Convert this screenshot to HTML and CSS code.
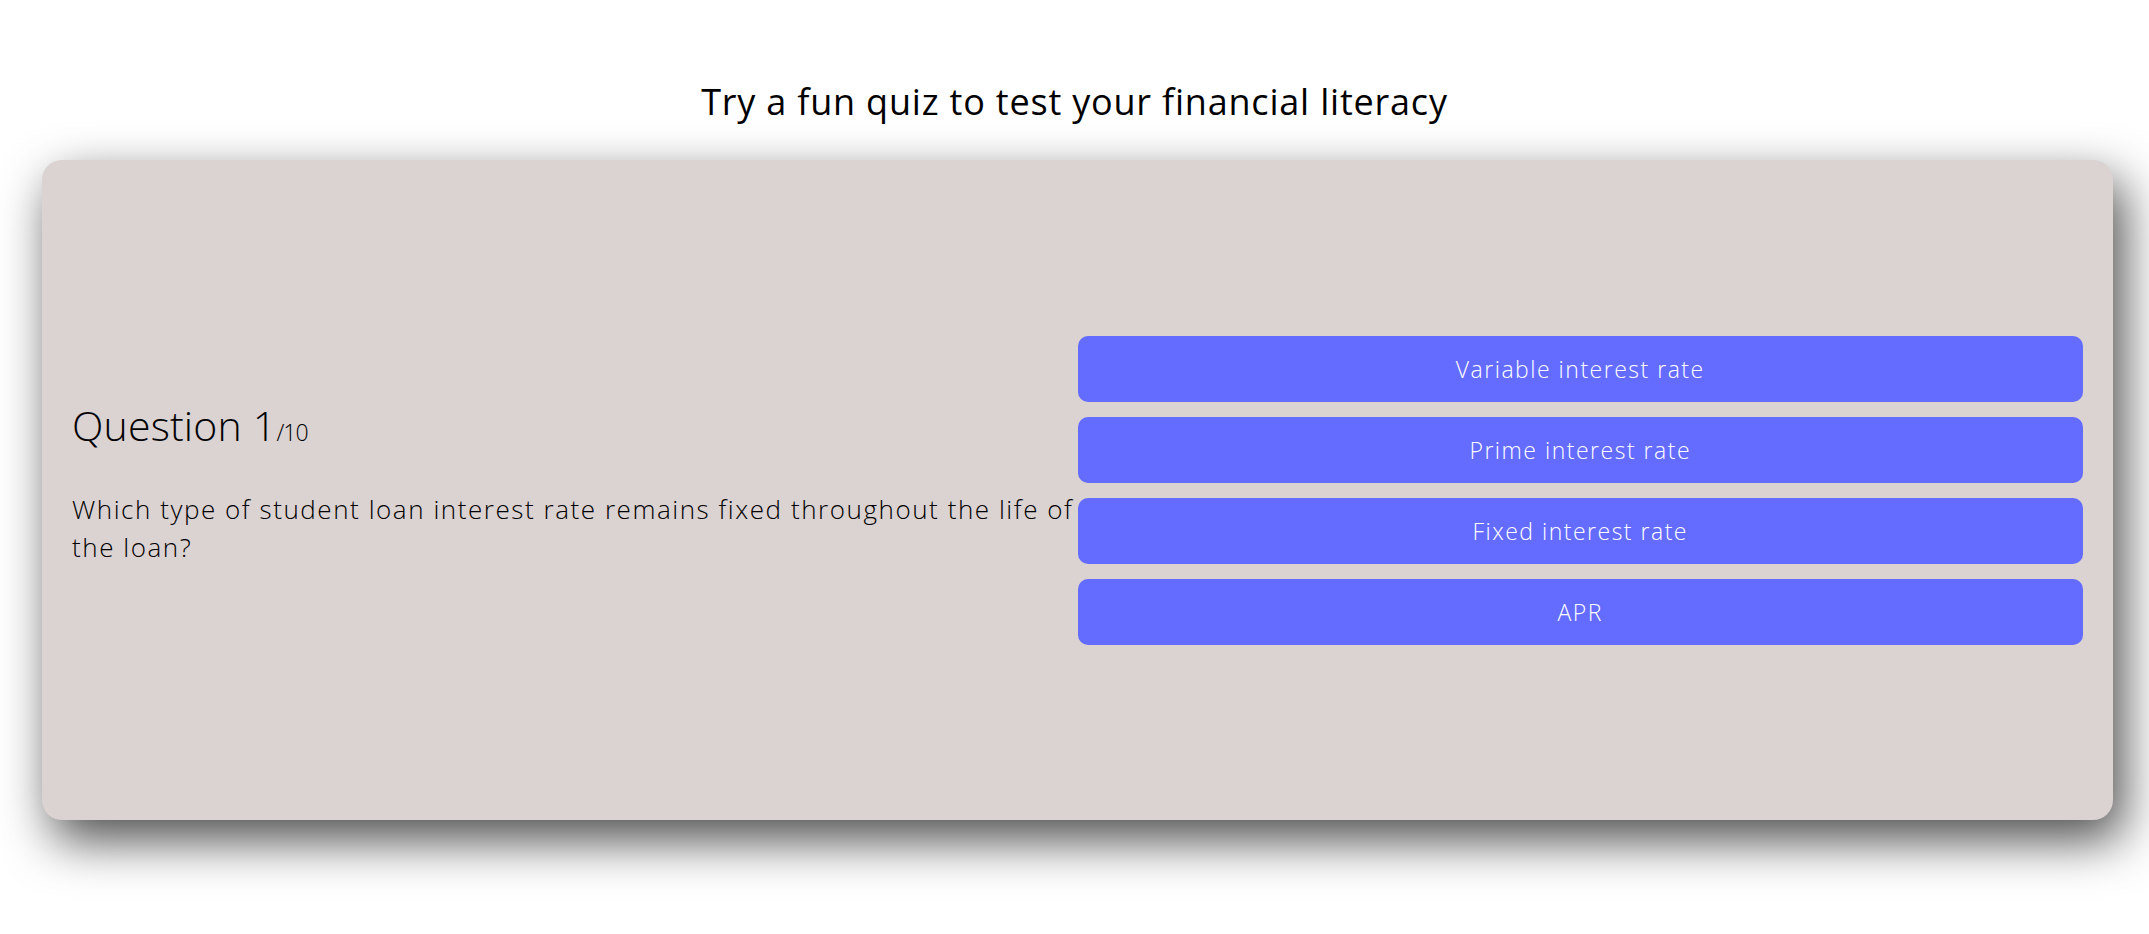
FILE: index.html
```html
<!DOCTYPE html>
<html lang="en">
<head>
<meta charset="utf-8">
<title>Financial literacy quiz</title>
<link rel="stylesheet" href="styles.css">
</head>
<body>
  <h1 class="page-title">Try a fun quiz to test your financial literacy</h1>
  <div class="card-wrap">
    <section class="quiz-card">
      <div class="question-side">
        <div class="question-count">Question 1<span class="question-total">/10</span></div>
        <p class="question-text">Which type of student loan interest rate remains fixed throughout the life of the loan?</p>
      </div>
      <div class="answer-side">
        <button class="answer-btn">Variable interest rate</button>
        <button class="answer-btn">Prime interest rate</button>
        <button class="answer-btn">Fixed interest rate</button>
        <button class="answer-btn">APR</button>
      </div>
    </section>
  </div>
</body>
</html>
```

FILE: styles.css
```css
html, body {
  margin: 0;
  padding: 0;
  background: #ffffff;
}

body {
  font-family: "Open Sans", "Liberation Sans", sans-serif;
  color: #000000;
}

.page-title {
  margin: 0;
  padding-top: 82px;
  height: 40px;
  line-height: 40px;
  font-size: 36px;
  font-weight: 500;
  text-align: center;
  letter-spacing: 0.8px;
}

.card-wrap {
  padding: 38px 36px 100px 42px;
}

.quiz-card {
  display: flex;
  align-items: center;
  height: 660px;
  padding: 0 30px;
  background: #dbd2d2;
  border-radius: 20px;
  box-shadow: 10px 20px 50px rgba(0, 0, 0, 0.7);
}

.question-side {
  flex: 1 1 0;
  min-width: 0;
}

.question-count {
  font-size: 41px;
  font-weight: 300;
  line-height: 48px;
  margin-bottom: 34px;
  letter-spacing: 0.2px;
}

.question-total {
  font-size: 23px;
  letter-spacing: -1px;
}

.question-text {
  margin: 0 0 14px 0;
  font-size: 26px;
  font-weight: 300;
  line-height: 38px;
  letter-spacing: 1.55px;
}

.answer-side {
  flex: 1 1 0;
  min-width: 0;
  display: flex;
  flex-direction: column;
  gap: 15px;
}

.answer-btn {
  height: 66px;
  border: none;
  border-radius: 10px;
  background: #646cff;
  color: #ffffff;
  font-family: inherit;
  font-size: 23px;
  font-weight: 300;
  letter-spacing: 1.5px;
  cursor: pointer;
}
```
